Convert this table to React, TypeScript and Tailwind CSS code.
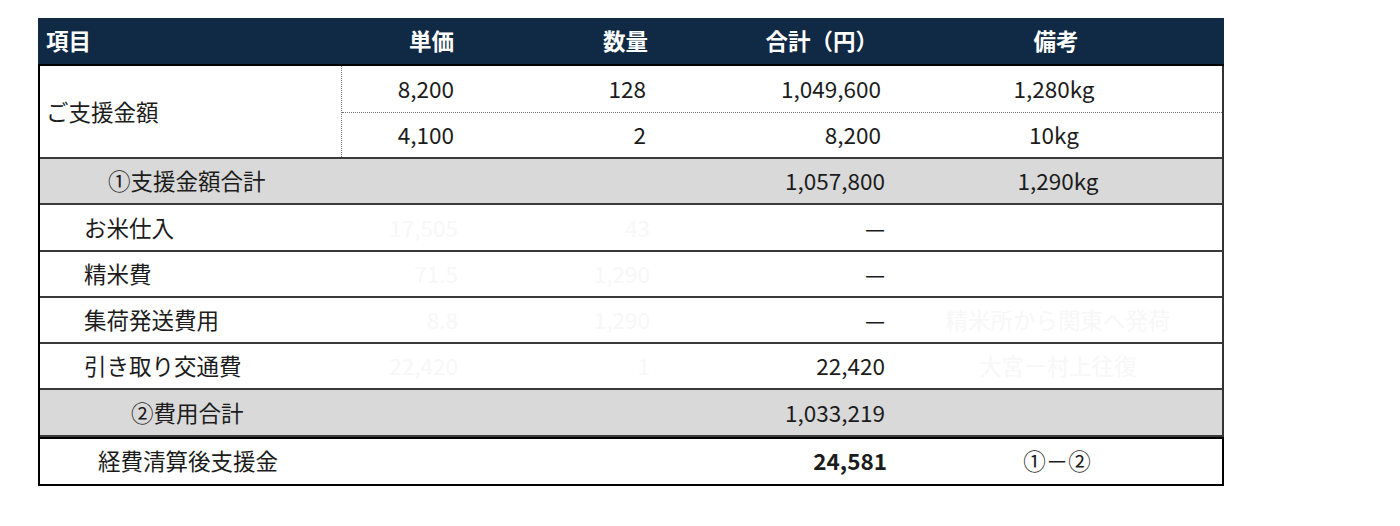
const font = { fontFamily: '"Noto Sans CJK JP", "Noto Sans", sans-serif' };

type Row = {
  label: string;
  indent: string;
  price?: string;
  qty?: string;
  total?: string;
  note?: string;
  gray?: boolean;
};

const rows: Row[] = [
  { label: '①支援金額合計', indent: 'pl-[68px]', total: '1,057,800', note: '1,290kg', gray: true },
  { label: 'お米仕入', indent: 'pl-[44px]', price: '17,505', qty: '43', total: '—' },
  { label: '精米費', indent: 'pl-[44px]', price: '71.5', qty: '1,290', total: '—' },
  { label: '集荷発送費用', indent: 'pl-[44px]', price: '8.8', qty: '1,290', total: '—', note: '精米所から関東へ発荷' },
  { label: '引き取り交通費', indent: 'pl-[44px]', price: '22,420', qty: '1', total: '22,420', note: '大宮ー村上往復' },
  { label: '②費用合計', indent: 'pl-[91px]', total: '1,033,219', gray: true },
];

const cols = 'grid grid-cols-[305px_135px_192px_218px_336px]';

export default function App() {
  return (
    <div className="min-h-[526px] bg-white pt-[18px] pl-[38px]" style={font}>
      <div className="w-[1186px] text-[22.5px] text-[#1c1c1c]">
        {/* header */}
        <div className={`${cols} h-[48px] items-center bg-[#102a45] font-bold text-white border-b-2 border-black`}>
          <div className="pl-[8px]">項目</div>
          <div className="pr-[24px] text-right">単価</div>
          <div className="pr-[22px] text-right">数量</div>
          <div className="pr-[10px] text-right">合計（円）</div>
          <div className="text-center">備考</div>
        </div>

        <div className="border-l-2 border-r-2 border-l-black border-r-[#333]">
          {/* ご支援金額 block */}
          <div className="flex h-[93px] border-b-2 border-[#3a3a3a]">
            <div className="flex w-[305px] items-center pl-[6px] border-r border-dotted border-[#777]">ご支援金額</div>
            <div className="flex flex-1 flex-col">
              <div className="grid h-[47px] grid-cols-[134px_192px_218px_336px] items-center border-b border-dotted border-[#777]">
                <div className="pr-[22px] text-right">8,200</div>
                <div className="pr-[22px] text-right">128</div>
                <div className="pr-[5px] text-right">1,049,600</div>
                <div className="text-center">1,280kg</div>
              </div>
              <div className="grid flex-1 grid-cols-[134px_192px_218px_336px] items-center">
                <div className="pr-[22px] text-right">4,100</div>
                <div className="pr-[22px] text-right">2</div>
                <div className="pr-[5px] text-right">8,200</div>
                <div className="text-center">10kg</div>
              </div>
            </div>
          </div>

          {rows.map((r) => (
            <div
              key={r.label}
              className={`${cols} h-[46.3px] items-center border-b-2 border-[#3a3a3a] ${r.gray ? 'bg-[#d9d9d9]' : 'bg-white'}`}
            >
              <div className={r.indent}>{r.label}</div>
              <div className="pr-[22px] text-right text-[#f7f7f7]">{r.price}</div>
              <div className="pr-[22px] text-right text-[#f7f7f7]">{r.qty}</div>
              <div className="pr-[5px] text-right">{r.total}</div>
              <div className={`text-center ${r.gray ? '' : 'text-[#f7f7f7]'}`}>{r.note}</div>
            </div>
          ))}
        </div>

        {/* final row */}
        <div className={`${cols} h-[49px] items-center border-2 border-black bg-white`}>
          <div className="pl-[58px]">経費清算後支援金</div>
          <div />
          <div />
          <div className="pr-[3px] text-right font-bold">24,581</div>
          <div className="pr-[2px] text-center">①－②</div>
        </div>
      </div>
    </div>
  );
}
